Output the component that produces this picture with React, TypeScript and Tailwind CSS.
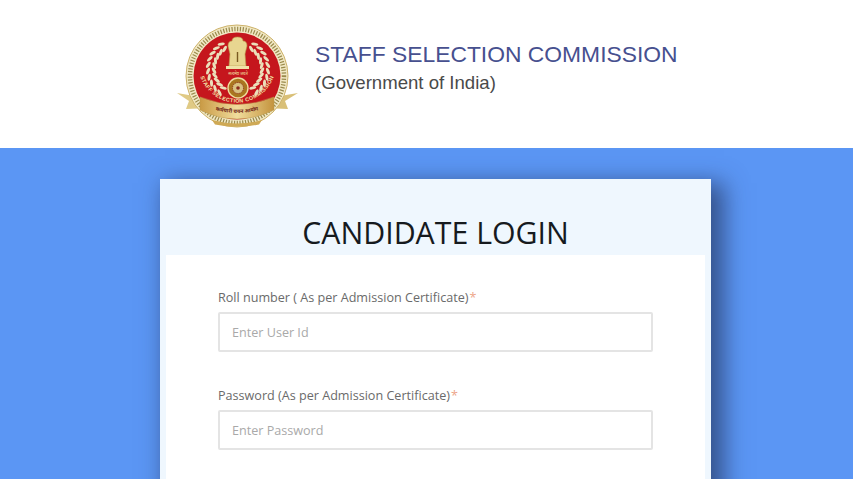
const SSCLogo = () => {
  const leaves = [0, 1, 2, 3, 4, 5, 6, 7, 8, 9]
  return (
    <svg width="130" height="110" viewBox="172 20 130 110" className="shrink-0">
      <defs>
        <path id="ssc-arc" d="M200 76 A39 39 0 0 0 274 76" fill="none" />
        <path id="ssc-ribbon" d="M206 107 Q237 119 268 107" fill="none" />
        <linearGradient id="ssc-gold" x1="0" x2="1" y1="0" y2="0">
          <stop offset="0" stopColor="#c99a45" />
          <stop offset="0.5" stopColor="#f0dc9c" />
          <stop offset="1" stopColor="#c4933d" />
        </linearGradient>
      </defs>
      {/* ribbon tails */}
      <path d="M177 93 L200 97 L210 108 L186 109 L189 101 Z" fill="#e0ca85" />
      <path d="M298 93 L274 97 L264 108 L288 109 L285 101 Z" fill="#d9c078" />
      {/* outer ring */}
      <circle cx="237" cy="76" r="51" fill="#f1e8c4" stroke="#cdb26a" strokeWidth="1" />
      <circle cx="237" cy="76" r="47" fill="none" stroke="#9a8a4c" strokeWidth="4.5" strokeDasharray="1.2 1.6" />
      <circle cx="237" cy="76" r="43.5" fill="#c5161d" />
      {/* wheel text */}
      <text fontFamily="'Liberation Sans', sans-serif" fontSize="5.4" fontWeight="700" fill="#f3e3a8" letterSpacing="0.35">
        <textPath href="#ssc-arc" startOffset="50%" textAnchor="middle">
          STAFF SELECTION COMMISSION
        </textPath>
      </text>
      {/* wreath */}
      {leaves.map((i) => {
        const deg = 128 + i * 12
        const a = deg * (Math.PI / 180)
        return [24, 30].map((r, n) => {
          const x = 238 + r * Math.cos(a)
          const y = 69 + r * Math.sin(a)
          const tilt = n === 0 ? deg - 25 : deg + 25
          return (
            <g key={`${i}-${r}`}>
              <ellipse cx={x} cy={y} rx="1.5" ry="3.6" fill="#ebe0bb" transform={`rotate(${tilt} ${x} ${y})`} />
              <ellipse cx={476 - x} cy={y} rx="1.5" ry="3.6" fill="#ebe0bb" transform={`rotate(${-tilt} ${476 - x} ${y})`} />
            </g>
          )
        })
      })}
      {/* emblem */}
      <path d="M228 46 Q228 41 232 41 Q232 37 237.5 37 Q243 37 243 41 Q247 41 247 46 L245 54 L246 66 L229 66 L230 54 Z" fill="#e8d690" stroke="#b79a4c" strokeWidth="0.6" />
      <rect x="226" y="66" width="23" height="3" fill="#f0e2a8" />
      <rect x="236.8" y="52" width="1.4" height="10" fill="#7a5a20" />
      <text x="238" y="75" textAnchor="middle" fontFamily="'Noto Sans', sans-serif" fontSize="4" fill="#f3e3a8">
        सत्यमेव जयते
      </text>
      {/* wheel */}
      <circle cx="238" cy="88" r="10" fill="#a9761f" stroke="#efdd9f" strokeWidth="1.4" />
      <circle cx="238" cy="88" r="5.5" fill="#d8c180" stroke="#8a2a1c" strokeWidth="1" strokeDasharray="1 1" />
      <circle cx="238" cy="88" r="1.8" fill="#8a2a1c" />
      {/* front ribbon */}
      <path d="M200 97 Q237 112 274 97 L274 110 Q237 128 200 110 Z" fill="url(#ssc-gold)" stroke="#b89a4c" strokeWidth="0.5" />
      <path d="M212 120 Q237 127 262 120 L259 124.5 Q237 129 215 124.5 Z" fill="#cfa955" />
      <text fontFamily="'Noto Sans', sans-serif" fontSize="5.2" fontWeight="700" fill="#6e2416">
        <textPath href="#ssc-ribbon" startOffset="50%" textAnchor="middle">
          कर्मचारी चयन आयोग
        </textPath>
      </text>
    </svg>
  )
}

const Field = ({ label, placeholder }: { label: string; placeholder: string }) => (
  <div>
    <div className="h-[19px] text-[12.6px] leading-[19px] text-[#6a6a6a]">
      {label}
      <span className="ml-px text-[#eda68a]">*</span>
    </div>
    <div className="mt-[5px] h-10 w-[435px] rounded-[2px] border-2 border-[#e4e4e4] bg-white pl-3 text-[12.6px] leading-[37px] text-[#a9a9a9]">
      {placeholder}
    </div>
  </div>
)

export default function App() {
  return (
    <div className="h-[479px] w-[853px] overflow-hidden bg-[#5b96f4] font-['Open_Sans',sans-serif]">
      <header className="flex h-[148px] items-start gap-[13px] bg-white pl-[172px] pt-5">
        <SSCLogo />
        <div className="pt-5 font-['Liberation_Sans',sans-serif]">
          <div className="text-[22.85px] leading-[28px] text-[#47508f]">STAFF SELECTION COMMISSION</div>
          <div className="mt-[3px] text-[18.6px] leading-[24px] text-[#4a4a4a]">(Government of India)</div>
        </div>
      </header>
      <div className="pl-40 pt-[31px]">
        <div className="w-[551px] bg-[#eff7fe] px-[6px] shadow-[9px_8px_22px_4px_rgba(35,50,90,0.68)]">
          <h1 className="pt-[34px] text-center text-[30.3px] leading-[40px] font-medium text-[#161a1e]">
            CANDIDATE LOGIN
          </h1>
          <div className="mt-[2px] flex h-[300px] flex-col gap-[34px] bg-white pl-[52px] pt-[33px]">
            <Field label="Roll number ( As per Admission Certificate)" placeholder="Enter User Id" />
            <Field label="Password (As per Admission Certificate)" placeholder="Enter Password" />
          </div>
        </div>
      </div>
    </div>
  )
}
